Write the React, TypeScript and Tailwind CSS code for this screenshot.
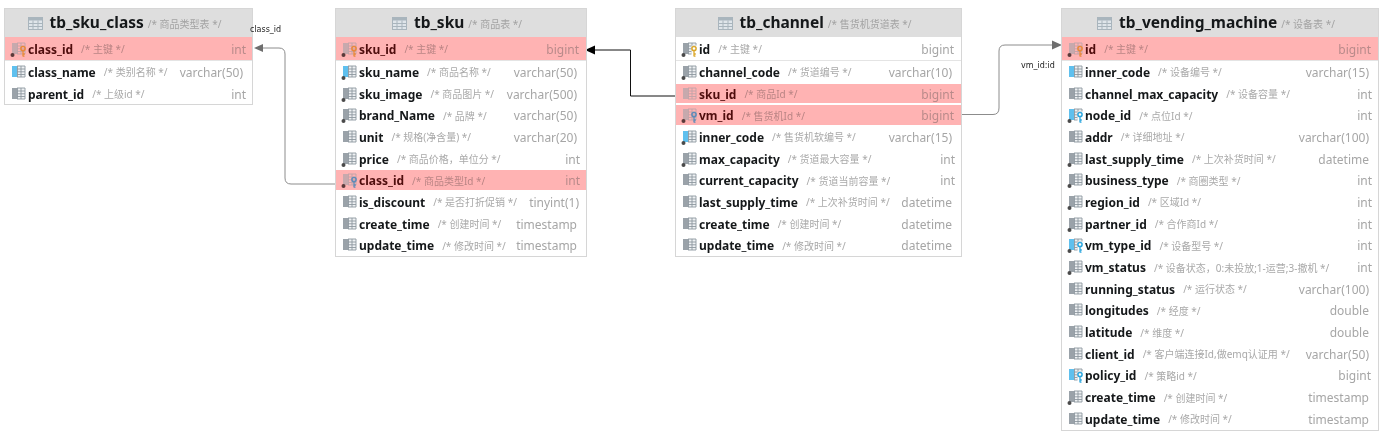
type Row = {
    name: string
    comment: string
    type: string
    blue?: boolean
    dot?: boolean
    keyColor?: string
    pink?: boolean
}

type Table = {
    name: string
    comment: string
    box: string
    rows: Row[]
}

const ORANGE = "#e8893a"
const GOLD = "#dba72a"
const STEEL = "#5f8bb8"
const CYAN = "#2ba6de"

const tables: Table[] = [
    {
        name: "tb_sku_class",
        comment: "/* 商品类型表 */",
        box: "left-[4px] top-[8px] w-[249px]",
        rows: [
            { name: "class_id", comment: "/* 主键 */", type: "int", dot: true, keyColor: ORANGE, pink: true },
            { name: "class_name", comment: "/* 类别名称 */", type: "varchar(50)", blue: true },
            { name: "parent_id", comment: "/* 上级id */", type: "int" },
        ],
    },
    {
        name: "tb_sku",
        comment: "/* 商品表 */",
        box: "left-[335px] top-[8px] w-[252px]",
        rows: [
            { name: "sku_id", comment: "/* 主键 */", type: "bigint", dot: true, keyColor: ORANGE, pink: true },
            { name: "sku_name", comment: "/* 商品名称 */", type: "varchar(50)", blue: true, dot: true },
            { name: "sku_image", comment: "/* 商品图片 */", type: "varchar(500)", dot: true },
            { name: "brand_Name", comment: "/* 品牌 */", type: "varchar(50)", dot: true },
            { name: "unit", comment: "/* 规格(净含量) */", type: "varchar(20)" },
            { name: "price", comment: "/* 商品价格，单位分 */", type: "int", dot: true },
            { name: "class_id", comment: "/* 商品类型Id */", type: "int", dot: true, keyColor: STEEL, pink: true },
            { name: "is_discount", comment: "/* 是否打折促销 */", type: "tinyint(1)" },
            { name: "create_time", comment: "/* 创建时间 */", type: "timestamp" },
            { name: "update_time", comment: "/* 修改时间 */", type: "timestamp" },
        ],
    },
    {
        name: "tb_channel",
        comment: "/* 售货机货道表 */",
        box: "left-[675px] top-[8px] w-[287px]",
        rows: [
            { name: "id", comment: "/* 主键 */", type: "bigint", dot: true, keyColor: GOLD },
            { name: "channel_code", comment: "/* 货道编号 */", type: "varchar(10)", dot: true },
            { name: "sku_id", comment: "/* 商品Id */", type: "bigint", pink: true },
            { name: "vm_id", comment: "/* 售货机Id */", type: "bigint", dot: true, keyColor: STEEL, pink: true },
            { name: "inner_code", comment: "/* 售货机软编号 */", type: "varchar(15)", blue: true, dot: true },
            { name: "max_capacity", comment: "/* 货道最大容量 */", type: "int", dot: true },
            { name: "current_capacity", comment: "/* 货道当前容量 */", type: "int" },
            { name: "last_supply_time", comment: "/* 上次补货时间 */", type: "datetime" },
            { name: "create_time", comment: "/* 创建时间 */", type: "datetime" },
            { name: "update_time", comment: "/* 修改时间 */", type: "datetime" },
        ],
    },
    {
        name: "tb_vending_machine",
        comment: "/* 设备表 */",
        box: "left-[1061px] top-[8px] w-[318px]",
        rows: [
            { name: "id", comment: "/* 主键 */", type: "bigint", dot: true, keyColor: ORANGE, pink: true },
            { name: "inner_code", comment: "/* 设备编号 */", type: "varchar(15)", blue: true },
            { name: "channel_max_capacity", comment: "/* 设备容量 */", type: "int" },
            { name: "node_id", comment: "/* 点位Id */", type: "int", blue: true, dot: true, keyColor: CYAN },
            { name: "addr", comment: "/* 详细地址 */", type: "varchar(100)" },
            { name: "last_supply_time", comment: "/* 上次补货时间 */", type: "datetime", dot: true },
            { name: "business_type", comment: "/* 商圈类型 */", type: "int", dot: true },
            { name: "region_id", comment: "/* 区域Id */", type: "int", dot: true },
            { name: "partner_id", comment: "/* 合作商Id */", type: "int", dot: true },
            { name: "vm_type_id", comment: "/* 设备型号 */", type: "int", blue: true, dot: true, keyColor: CYAN },
            { name: "vm_status", comment: "/* 设备状态，0:未投放;1-运营;3-撤机 */", type: "int", dot: true },
            { name: "running_status", comment: "/* 运行状态 */", type: "varchar(100)" },
            { name: "longitudes", comment: "/* 经度 */", type: "double" },
            { name: "latitude", comment: "/* 维度 */", type: "double" },
            { name: "client_id", comment: "/* 客户端连接Id,做emq认证用 */", type: "varchar(50)" },
            { name: "policy_id", comment: "/* 策略id */", type: "bigint", blue: true, keyColor: CYAN },
            { name: "create_time", comment: "/* 创建时间 */", type: "timestamp", dot: true },
            { name: "update_time", comment: "/* 修改时间 */", type: "timestamp" },
        ],
    },
]

// the type column is not quite flush right in the picture, it depends on the type
const typePadding = (type: string) => {
    if (type === "int") return "pr-[6px]"
    if (type === "bigint" || type.startsWith("tinyint")) return "pr-[7px]"
    return "pr-[9px]"
}

function ColumnIcon({ blue, dot, keyColor, pink }: { blue?: boolean; dot?: boolean; keyColor?: string; pink?: boolean }) {
    return (
        <svg width="17" height="16" viewBox="0 0 17 16" className="shrink-0">
            <g opacity={pink ? 0.55 : 1}>
                <rect x="2" y="1" width="13" height="11" fill={pink ? "#ffb3b3" : "#eef1f3"} />
                <rect x="2" y="1" width="5" height="11" fill={blue ? "#5fc0ee" : "#9aa2a9"} />
                <path d="M7.5 1v11M11 1v11M7 4h8M7 6.8h8M7 9.5h8M15 1v11M7 1h8M7 12h8" stroke="#8d979f" strokeWidth="0.9" fill="none" />
            </g>
            {dot && <circle cx="2.5" cy="13" r="2" fill={pink ? "#5a3a3a" : "#4a4a4a"} />}
            {keyColor && (
                <g>
                    {!pink && <rect x="10.5" y="3.5" width="6" height="12.5" fill="#ffffff" />}
                    <circle cx="13" cy="6.5" r="2.1" fill="none" stroke={keyColor} strokeWidth="1.5" />
                    <path d="M13 8.6v6M13 12h1.8M13 14.2h1.5" stroke={keyColor} strokeWidth="1.3" fill="none" />
                </g>
            )}
        </svg>
    )
}

function TableIcon() {
    return (
        <svg width="15" height="13" viewBox="0 0 15 13" className="shrink-0">
            <rect x="0.5" y="0.5" width="14" height="12" fill="#dfe5ea" stroke="#a9b5bd" />
            <rect x="0.5" y="0.5" width="14" height="3" fill="#a9b5bd" />
            <path d="M5 3.5v9M10 3.5v9M0.5 6.5h14M0.5 9.5h14" stroke="#a9b5bd" strokeWidth="1" fill="none" />
        </svg>
    )
}

function TableRow({ row, first }: { row: Row; first: boolean }) {
    const height = first ? "h-[24px] border-b border-[#e4e4e4] pt-[2px]" : "h-[21.7px] border-y border-white pt-[2px]"

    return (
        <div className={`flex items-center pl-[5px] ${height} ${row.pink ? "bg-[#ffb3b3]" : "bg-white"}`}>
            <ColumnIcon blue={row.blue} dot={row.dot} keyColor={row.keyColor} pink={row.pink} />
            <span className={`ml-[1px] text-[12px] font-bold whitespace-nowrap ${row.pink ? "text-[#4f0d0d]" : "text-[#15181a]"}`}>
                {row.name}
            </span>
            <span className={`ml-[8px] text-[10px] whitespace-nowrap ${row.pink ? "text-[#b98484]" : "text-[#a9a9a9]"}`}>
                {row.comment}
            </span>
            <span className={`ml-auto text-[12px] whitespace-nowrap ${typePadding(row.type)} ${row.pink ? "text-[#b98a8a]" : "text-[#a6a6a6]"}`}>
                {row.type}
            </span>
        </div>
    )
}

function DbTable({ table }: { table: Table }) {
    return (
        <div className={`absolute ${table.box} border border-[#d6d6d6] bg-white`}>
            <div className="flex h-[28px] items-center justify-center bg-[#dedede] pr-[8px]">
                <TableIcon />
                <span className="ml-[7px] text-[15.5px] font-bold text-[#15181a] whitespace-nowrap">{table.name}</span>
                <span className="ml-[4px] mt-[3px] text-[10px] text-[#a3a3a3] whitespace-nowrap">{table.comment}</span>
            </div>
            {table.rows.map((row, i) => (
                <TableRow key={row.name} row={row} first={i === 0} />
            ))}
        </div>
    )
}

function Connectors() {
    return (
        <svg width="1384" height="439" className="absolute left-0 top-0">
            <path d="M335 184H291Q285 184 285 178V54Q285 48 279 48H262" fill="none" stroke="#8c8c8c" strokeWidth="1" />
            <path d="M254 48L263 44V52Z" fill="#6e6e6e" />
            <path d="M675 96H630.5V50H594" fill="none" stroke="#111" strokeWidth="1" />
            <path d="M585 50L595 45.5V54.5Z" fill="#000" />
            <path d="M962 114.5H993Q999 114.5 999 108V51Q999 45 1005 45H1052" fill="none" stroke="#8c8c8c" strokeWidth="1" />
            <path d="M1062 45L1052 40.5V49.5Z" fill="#6e6e6e" />
        </svg>
    )
}

export default function App() {
    return (
        <div
            className="relative h-[439px] w-[1384px] overflow-hidden bg-white blur-[0.35px]"
            style={{ fontFamily: '"Noto Sans", "Noto Sans CJK SC", sans-serif' }}
        >
            <Connectors />
            {tables.map((table) => (
                <DbTable key={table.name} table={table} />
            ))}
            <span className="absolute left-[250px] top-[24px] font-['DejaVu_Sans'] text-[8px] text-[#222] whitespace-nowrap">class_id</span>
            <span className="absolute left-[1021px] top-[60px] font-['DejaVu_Sans'] text-[8px] text-[#222] whitespace-nowrap">vm_id:id</span>
        </div>
    )
}
